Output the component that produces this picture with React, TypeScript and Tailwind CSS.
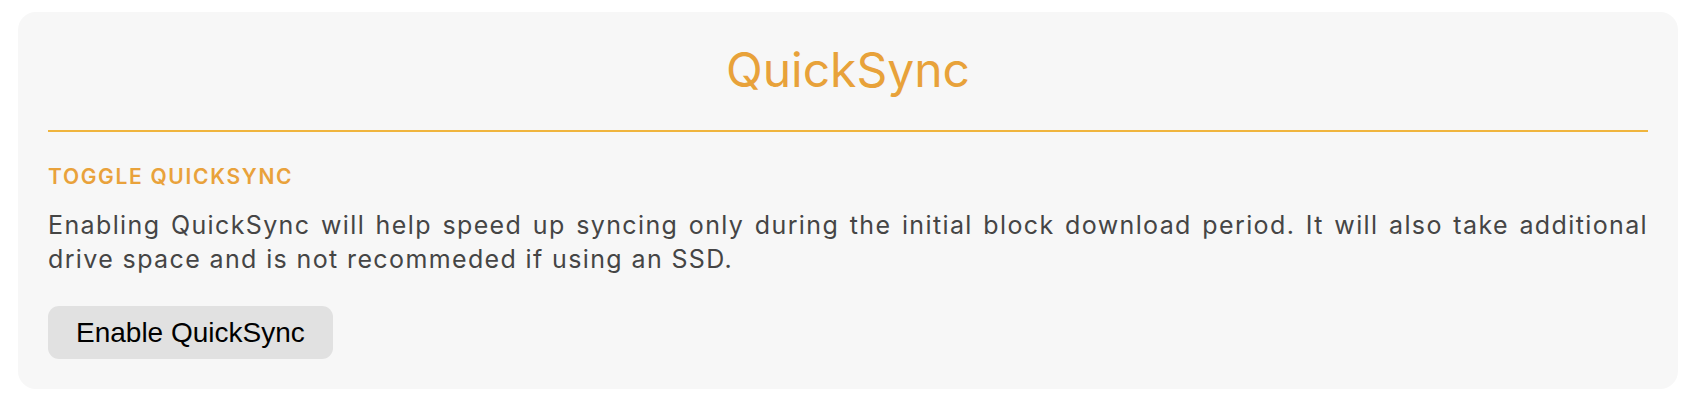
export default function App() {
  return (
    <div className="min-h-screen bg-white pt-[12px] pl-[18px] pr-[14px]" style={{ fontFamily: 'Inter, "Noto Sans", sans-serif' }}>
      <div className="rounded-[18px] bg-[#f7f7f7] px-[30px] pt-[34px] pb-[30px]">
        <h1 className="text-center text-[48px] leading-none font-normal text-[#e8a23a]">QuickSync</h1>
        <div className="mt-[36px] h-[2px] bg-[#f0b53e]" />

        <h2 className="mt-[30px] text-[21px] leading-[29px] font-semibold uppercase tracking-[0.08em] text-[#e9a23b]">
          Toggle QuickSync
        </h2>
        <p className="mt-[18px] text-[25px] leading-[33.6px] tracking-[0.055em] text-justify text-[#454545]">
          Enabling QuickSync will help speed up syncing only during the initial block download period. It will also take additional drive space and is not recommeded if using an SSD.
        </p>

        <button
          type="button"
          className="mt-[30px] h-[53px] px-[28px] rounded-[11px] bg-[#e1e1e1] text-[28px] leading-none text-black"
          style={{ fontFamily: '"Liberation Sans", Arial, sans-serif' }}
        >
          Enable QuickSync
        </button>
      </div>
    </div>
  );
}
